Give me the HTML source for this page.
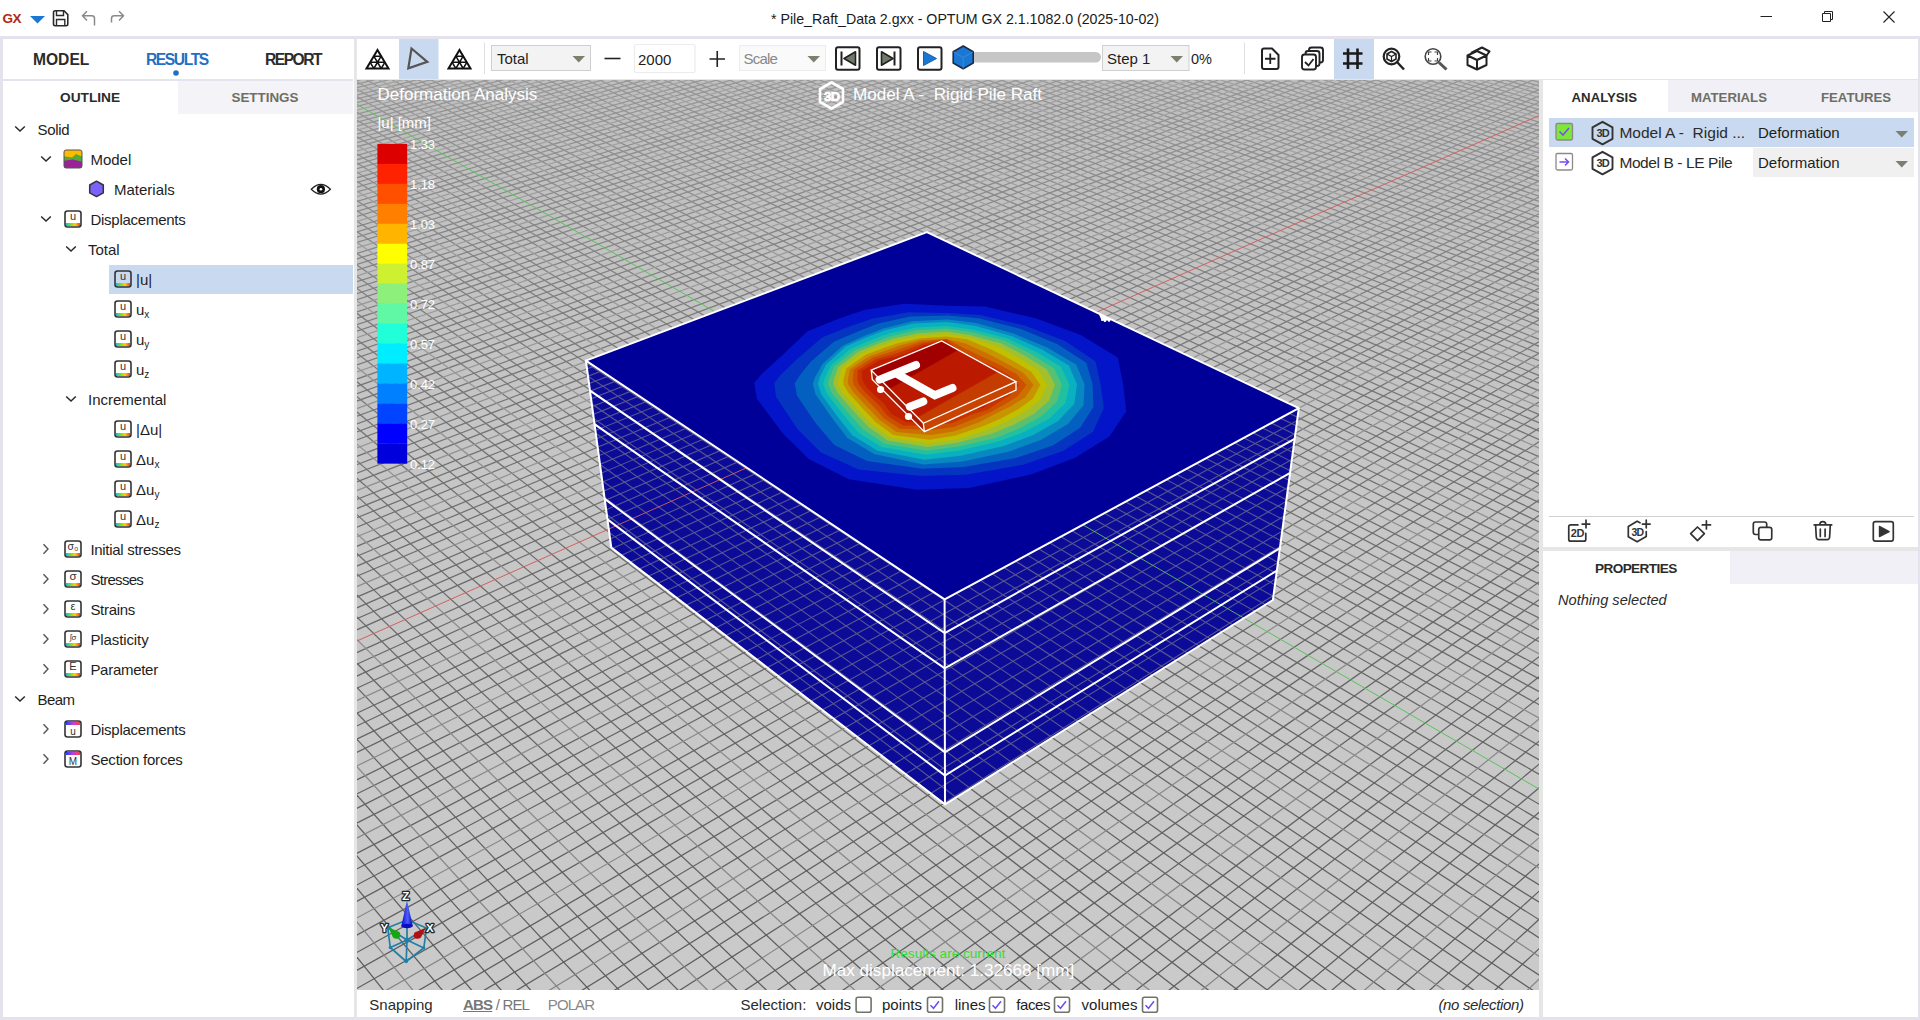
<!DOCTYPE html>
<html><head><meta charset="utf-8"><style>
html,body{margin:0;padding:0;}
body{width:1920px;height:1020px;position:relative;overflow:hidden;background:#e3e2ed;font-family:"Liberation Sans", sans-serif;color:#1e1e1e;}
.t{position:absolute;white-space:nowrap;}
.r{position:absolute;}
svg{position:absolute;overflow:visible;}
</style></head><body>
<div class="r" style="left:0px;top:0px;width:1920px;height:36px;background:#ffffff;"></div>
<div class="r" style="left:3px;top:39px;width:351px;height:978px;background:#ffffff;"></div>
<div class="r" style="left:354px;top:39px;width:3px;height:978px;background:#e6e6e6;"></div>
<div class="r" style="left:357px;top:39px;width:1561px;height:40px;background:#ffffff;"></div>
<div class="r" style="left:357px;top:79px;width:1561px;height:1px;background:#e4e4ee;"></div>
<div class="r" style="left:357px;top:990px;width:1182px;height:27px;background:#ffffff;"></div>
<div class="r" style="left:1539px;top:80px;width:4px;height:937px;background:#e6e6e6;"></div>
<div class="r" style="left:1543px;top:80px;width:375px;height:937px;background:#ffffff;"></div>
<div class="t" style="left:771px;top:11.6px;font-size:14.2px;line-height:14.2px;color:#1a1a1a;">* Pile_Raft_Data 2.gxx - OPTUM GX 2.1.1082.0 (2025-10-02)</div>
<div class="t" style="left:33px;top:51.8px;font-size:15.6px;line-height:15.6px;font-weight:bold;color:#2b2b2b;">MODEL</div>
<div class="t" style="left:146px;top:51.8px;font-size:15.6px;line-height:15.6px;font-weight:bold;color:#1f6fc5;letter-spacing:-1.4px;">RESULTS</div>
<div class="t" style="left:265px;top:51.8px;font-size:15.6px;line-height:15.6px;font-weight:bold;color:#2b2b2b;letter-spacing:-1.5px;">REPORT</div>
<svg style="left:172px;top:69px" width="8" height="8"><circle cx="4" cy="4" r="2.8" fill="#1f6fc5"/></svg>
<div class="r" style="left:3px;top:79px;width:350px;height:2px;background:#e4e3ee;"></div>
<div class="r" style="left:178px;top:81px;width:175px;height:33px;background:#f3f3f8;"></div>
<div class="t" style="left:60px;top:91.2px;font-size:13.7px;line-height:13.7px;font-weight:bold;color:#2b2b2b;">OUTLINE</div>
<div class="t" style="left:231.5px;top:91.3px;font-size:13.4px;line-height:13.4px;font-weight:bold;color:#6e6e64;">SETTINGS</div>
<svg style="left:0;top:0" width="1" height="1"><defs><linearGradient id="rb" x1="0" x2="1" y1="0" y2="0"><stop offset="0" stop-color="#00c8e6"/><stop offset="0.35" stop-color="#7be020"/><stop offset="0.65" stop-color="#ffd000"/><stop offset="1" stop-color="#ff3a1a"/></linearGradient><linearGradient id="rb2" x1="0" x2="1" y1="0" y2="0"><stop offset="0" stop-color="#2040ff"/><stop offset="0.5" stop-color="#c040e0"/><stop offset="1" stop-color="#ff4040"/></linearGradient></defs></svg>
<svg style="left:14px;top:125px" width="12" height="8"><path d="M1.2 1.5 L6 6 L10.8 1.5" fill="none" stroke="#2a2a2a" stroke-width="1.5"/></svg>
<div class="t" style="left:37.5px;top:122.2px;font-size:15px;line-height:15px;letter-spacing:-0.3px">Solid</div>
<svg style="left:40px;top:155px" width="12" height="8"><path d="M1.2 1.5 L6 6 L10.8 1.5" fill="none" stroke="#2a2a2a" stroke-width="1.5"/></svg>
<svg style="left:63px;top:149px" width="20" height="20"><clipPath id="mc"><rect x="1" y="1" width="18" height="18" rx="2"/></clipPath><g clip-path="url(#mc)"><rect x="0" y="0" width="20" height="20" fill="#ffbb00"/><path d="M0 7 L9 8.5 L13 5 L20 8 L20 20 L0 20Z" fill="#55aa33"/><path d="M0 12 L10 10.5 L20 13 L20 20 L0 20Z" fill="#992299"/></g><rect x="1" y="1" width="18" height="18" rx="2" fill="none" stroke="#555" stroke-width="1"/></svg>
<div class="t" style="left:90.4px;top:152.2px;font-size:15px;line-height:15px;">Model</div>
<svg style="left:88px;top:180px" width="17" height="18"><path d="M8.5 1.2 L15.3 5 L15.3 12.8 L8.5 16.6 L1.7 12.8 L1.7 5Z" fill="#7b61ff" stroke="#333" stroke-width="1.5" stroke-linejoin="round"/></svg>
<div class="t" style="left:114px;top:182.2px;font-size:15px;line-height:15px;">Materials</div>
<svg style="left:310px;top:181px" width="21" height="16"><path d="M1.3 8.3 Q10.9 -1.5 20.4 8.3 Q10.9 18 1.3 8.3Z" fill="none" stroke="#222" stroke-width="1.25"/><circle cx="10.9" cy="8.2" r="4.1" fill="#111"/><circle cx="10.9" cy="8.2" r="1.3" fill="#fff"/></svg>
<svg style="left:40px;top:215px" width="12" height="8"><path d="M1.2 1.5 L6 6 L10.8 1.5" fill="none" stroke="#2a2a2a" stroke-width="1.5"/></svg>
<svg style="left:64px;top:210px" width="18" height="18"><rect x="2" y="13" width="14" height="3" fill="url(#rb)"/><rect x="1" y="1" width="16" height="16" rx="2.5" fill="none" stroke="#333" stroke-width="1.6"/><text x="9" y="10" text-anchor="middle" font-family="Liberation Sans" font-size="11" fill="#333">u</text></svg>
<div class="t" style="left:90.4px;top:212.2px;font-size:15px;line-height:15px;letter-spacing:-0.25px">Displacements</div>
<svg style="left:65px;top:245px" width="12" height="8"><path d="M1.2 1.5 L6 6 L10.8 1.5" fill="none" stroke="#2a2a2a" stroke-width="1.5"/></svg>
<div class="t" style="left:88px;top:242.2px;font-size:15px;line-height:15px;">Total</div>
<div class="r" style="left:109px;top:265px;width:244px;height:29px;background:#c9d9ef;"></div>
<svg style="left:114px;top:270px" width="18" height="18"><rect x="2" y="13" width="14" height="3" fill="url(#rb)"/><rect x="1" y="1" width="16" height="16" rx="2.5" fill="none" stroke="#333" stroke-width="1.6"/><text x="9" y="10" text-anchor="middle" font-family="Liberation Sans" font-size="11" fill="#333">u</text></svg>
<div class="t" style="left:136px;top:271.7px;font-size:15px;line-height:15px;">|u|</div>
<svg style="left:114px;top:300px" width="18" height="18"><rect x="2" y="13" width="14" height="3" fill="url(#rb)"/><rect x="1" y="1" width="16" height="16" rx="2.5" fill="none" stroke="#333" stroke-width="1.6"/><text x="9" y="10" text-anchor="middle" font-family="Liberation Sans" font-size="11" fill="#333">u</text></svg>
<div class="t" style="left:136px;top:302.2px;font-size:15px;line-height:15px;">u<span style="font-size:10px;position:relative;top:3px">x</span></div>
<svg style="left:114px;top:330px" width="18" height="18"><rect x="2" y="13" width="14" height="3" fill="url(#rb)"/><rect x="1" y="1" width="16" height="16" rx="2.5" fill="none" stroke="#333" stroke-width="1.6"/><text x="9" y="10" text-anchor="middle" font-family="Liberation Sans" font-size="11" fill="#333">u</text></svg>
<div class="t" style="left:136px;top:332.2px;font-size:15px;line-height:15px;">u<span style="font-size:10px;position:relative;top:3px">y</span></div>
<svg style="left:114px;top:360px" width="18" height="18"><rect x="2" y="13" width="14" height="3" fill="url(#rb)"/><rect x="1" y="1" width="16" height="16" rx="2.5" fill="none" stroke="#333" stroke-width="1.6"/><text x="9" y="10" text-anchor="middle" font-family="Liberation Sans" font-size="11" fill="#333">u</text></svg>
<div class="t" style="left:136px;top:362.2px;font-size:15px;line-height:15px;">u<span style="font-size:10px;position:relative;top:3px">z</span></div>
<svg style="left:65px;top:395px" width="12" height="8"><path d="M1.2 1.5 L6 6 L10.8 1.5" fill="none" stroke="#2a2a2a" stroke-width="1.5"/></svg>
<div class="t" style="left:88px;top:392.2px;font-size:15px;line-height:15px;">Incremental</div>
<svg style="left:114px;top:420px" width="18" height="18"><rect x="2" y="13" width="14" height="3" fill="url(#rb)"/><rect x="1" y="1" width="16" height="16" rx="2.5" fill="none" stroke="#333" stroke-width="1.6"/><text x="9" y="10" text-anchor="middle" font-family="Liberation Sans" font-size="11" fill="#333">u</text></svg>
<div class="t" style="left:136px;top:421.7px;font-size:15px;line-height:15px;">|Δu|</div>
<svg style="left:114px;top:450px" width="18" height="18"><rect x="2" y="13" width="14" height="3" fill="url(#rb)"/><rect x="1" y="1" width="16" height="16" rx="2.5" fill="none" stroke="#333" stroke-width="1.6"/><text x="9" y="10" text-anchor="middle" font-family="Liberation Sans" font-size="11" fill="#333">u</text></svg>
<div class="t" style="left:136px;top:452.2px;font-size:15px;line-height:15px;">Δu<span style="font-size:10px;position:relative;top:3px">x</span></div>
<svg style="left:114px;top:480px" width="18" height="18"><rect x="2" y="13" width="14" height="3" fill="url(#rb)"/><rect x="1" y="1" width="16" height="16" rx="2.5" fill="none" stroke="#333" stroke-width="1.6"/><text x="9" y="10" text-anchor="middle" font-family="Liberation Sans" font-size="11" fill="#333">u</text></svg>
<div class="t" style="left:136px;top:482.2px;font-size:15px;line-height:15px;">Δu<span style="font-size:10px;position:relative;top:3px">y</span></div>
<svg style="left:114px;top:510px" width="18" height="18"><rect x="2" y="13" width="14" height="3" fill="url(#rb)"/><rect x="1" y="1" width="16" height="16" rx="2.5" fill="none" stroke="#333" stroke-width="1.6"/><text x="9" y="10" text-anchor="middle" font-family="Liberation Sans" font-size="11" fill="#333">u</text></svg>
<div class="t" style="left:136px;top:512.2px;font-size:15px;line-height:15px;">Δu<span style="font-size:10px;position:relative;top:3px">z</span></div>
<svg style="left:42px;top:543px" width="8" height="12"><path d="M1.5 1.2 L6 6 L1.5 10.8" fill="none" stroke="#555" stroke-width="1.4"/></svg>
<svg style="left:64px;top:540px" width="18" height="18"><rect x="2" y="13" width="14" height="3" fill="url(#rb)"/><rect x="1" y="1" width="16" height="16" rx="2.5" fill="none" stroke="#333" stroke-width="1.6"/><text x="9" y="10" text-anchor="middle" font-family="Liberation Sans" font-size="10.5" fill="#333">σ₀</text></svg>
<div class="t" style="left:90.4px;top:542.2px;font-size:15px;line-height:15px;letter-spacing:-0.3px">Initial stresses</div>
<svg style="left:42px;top:573px" width="8" height="12"><path d="M1.5 1.2 L6 6 L1.5 10.8" fill="none" stroke="#555" stroke-width="1.4"/></svg>
<svg style="left:64px;top:570px" width="18" height="18"><rect x="2" y="13" width="14" height="3" fill="url(#rb)"/><rect x="1" y="1" width="16" height="16" rx="2.5" fill="none" stroke="#333" stroke-width="1.6"/><text x="9" y="10" text-anchor="middle" font-family="Liberation Sans" font-size="11.5" fill="#333">σ</text></svg>
<div class="t" style="left:90.4px;top:572.2px;font-size:15px;line-height:15px;letter-spacing:-0.7px">Stresses</div>
<svg style="left:42px;top:603px" width="8" height="12"><path d="M1.5 1.2 L6 6 L1.5 10.8" fill="none" stroke="#555" stroke-width="1.4"/></svg>
<svg style="left:64px;top:600px" width="18" height="18"><rect x="2" y="13" width="14" height="3" fill="url(#rb)"/><rect x="1" y="1" width="16" height="16" rx="2.5" fill="none" stroke="#333" stroke-width="1.6"/><text x="9" y="10" text-anchor="middle" font-family="Liberation Sans" font-size="11" fill="#333">ε</text></svg>
<div class="t" style="left:90.4px;top:602.2px;font-size:15px;line-height:15px;letter-spacing:-0.3px">Strains</div>
<svg style="left:42px;top:633px" width="8" height="12"><path d="M1.5 1.2 L6 6 L1.5 10.8" fill="none" stroke="#555" stroke-width="1.4"/></svg>
<svg style="left:64px;top:630px" width="18" height="18"><rect x="2" y="13" width="14" height="3" fill="url(#rb)"/><rect x="1" y="1" width="16" height="16" rx="2.5" fill="none" stroke="#333" stroke-width="1.6"/><text x="9" y="10" text-anchor="middle" font-family="Liberation Sans" font-size="8" fill="#333">∫σ</text></svg>
<div class="t" style="left:90.4px;top:632.2px;font-size:15px;line-height:15px;letter-spacing:-0.1px">Plasticity</div>
<svg style="left:42px;top:663px" width="8" height="12"><path d="M1.5 1.2 L6 6 L1.5 10.8" fill="none" stroke="#555" stroke-width="1.4"/></svg>
<svg style="left:64px;top:660px" width="18" height="18"><rect x="2" y="13" width="14" height="3" fill="url(#rb)"/><rect x="1" y="1" width="16" height="16" rx="2.5" fill="none" stroke="#333" stroke-width="1.6"/><text x="9" y="10" text-anchor="middle" font-family="Liberation Sans" font-size="11" fill="#333">E</text></svg>
<div class="t" style="left:90.4px;top:662.2px;font-size:15px;line-height:15px;letter-spacing:-0.28px">Parameter</div>
<svg style="left:14px;top:695px" width="12" height="8"><path d="M1.2 1.5 L6 6 L10.8 1.5" fill="none" stroke="#2a2a2a" stroke-width="1.5"/></svg>
<div class="t" style="left:37.5px;top:692.2px;font-size:15px;line-height:15px;letter-spacing:-0.6px">Beam</div>
<svg style="left:42px;top:723px" width="8" height="12"><path d="M1.5 1.2 L6 6 L1.5 10.8" fill="none" stroke="#555" stroke-width="1.4"/></svg>
<svg style="left:64px;top:720px" width="18" height="18"><rect x="2" y="2" width="14" height="3" fill="url(#rb2)"/><rect x="1" y="1" width="16" height="16" rx="2.5" fill="none" stroke="#333" stroke-width="1.6"/><text x="9" y="14.6" text-anchor="middle" font-family="Liberation Sans" font-size="10" fill="#333">u</text></svg>
<div class="t" style="left:90.4px;top:722.2px;font-size:15px;line-height:15px;letter-spacing:-0.25px">Displacements</div>
<svg style="left:42px;top:753px" width="8" height="12"><path d="M1.5 1.2 L6 6 L1.5 10.8" fill="none" stroke="#555" stroke-width="1.4"/></svg>
<svg style="left:64px;top:750px" width="18" height="18"><rect x="2" y="2" width="14" height="3" fill="url(#rb2)"/><rect x="1" y="1" width="16" height="16" rx="2.5" fill="none" stroke="#333" stroke-width="1.6"/><text x="9" y="14.6" text-anchor="middle" font-family="Liberation Sans" font-size="10" fill="#333">M</text></svg>
<div class="t" style="left:90.4px;top:752.2px;font-size:15px;line-height:15px;letter-spacing:-0.2px">Section forces</div>
<svg style="left:0;top:0" width="140" height="36">
<text x="2.5" y="23.2" font-family="Liberation Sans" font-weight="bold" font-size="13.5" fill="#b02a10" letter-spacing="-0.5">GX</text>
<polygon points="30,16 45,16 37.5,23.5" fill="#1a78d4"/>
<path d="M53.5 12.5 Q53.5 10.8 55.2 10.8 L64 10.8 L67.8 14.6 L67.8 24 Q67.8 25.7 66.1 25.7 L55.2 25.7 Q53.5 25.7 53.5 24Z" fill="none" stroke="#2a2a2a" stroke-width="1.6"/>
<path d="M56.5 11 L56.5 15.5 L63.5 15.5 L63.5 11 M56.5 25.5 L56.5 19.5 L64.8 19.5 L64.8 25.5" fill="none" stroke="#2a2a2a" stroke-width="1.4"/>
<path d="M94.5 25.5 L94.5 18.5 Q94.5 15.8 91.8 15.8 L83 15.8 M87 11.2 L82.5 15.8 L87 20.4" fill="none" stroke="#8a8a8a" stroke-width="1.5"/>
<path d="M111.5 22.5 L111.5 18.5 Q111.5 15.8 114.2 15.8 L123.5 15.8 M119 11.2 L123.5 15.8 L119 20.4" fill="none" stroke="#8a8a8a" stroke-width="1.5"/>
</svg>
<svg style="left:1750px;top:0" width="170" height="36">
<path d="M10.5 16.5 L22 16.5" stroke="#222" stroke-width="1"/>
<path d="M72.5 13.5 L72.5 21.5 L80.5 21.5 L80.5 13.5Z M74.5 13.5 L74.5 11.5 L82.5 11.5 L82.5 19.5 L80.5 19.5" fill="none" stroke="#222" stroke-width="1"/>
<path d="M133.5 11.5 L144.5 22.5 M144.5 11.5 L133.5 22.5" stroke="#222" stroke-width="1.1"/>
</svg>
<svg style="left:0;top:0" width="1920" height="90"><rect x="399" y="39" width="39.5" height="40" fill="#c9d9ef"/><g transform="translate(365.5,48.5)" fill="none" stroke="#111" stroke-linejoin="miter">
<path d="M12 1.5 L23 20 L1 20Z" stroke-width="2"/>
<path d="M4.67 13.83 L19.33 13.83 M8.33 7.67 L15.67 7.67 M8.33 20 L15.67 7.67 M15.67 20 L19.33 13.83 M15.67 20 L8.33 7.67 M8.33 20 L4.67 13.83" stroke-width="1.5"/></g><path d="M411.5 48.5 L427.3 61.8 L408.3 68.3Z" fill="none" stroke="#555" stroke-width="2.2" stroke-linejoin="miter"/><g transform="translate(447.5,48.5)" fill="none" stroke="#111" stroke-linejoin="miter">
<path d="M12 1.5 L23 20 L1 20Z" stroke-width="2"/>
<path d="M4.67 13.83 L19.33 13.83 M8.33 7.67 L15.67 7.67 M8.33 20 L15.67 7.67 M15.67 20 L19.33 13.83 M15.67 20 L8.33 7.67 M8.33 20 L4.67 13.83" stroke-width="1.5"/></g><path d="M484.5 42.5 L484.5 74" stroke="#e0e0e0" stroke-width="1"/><rect x="491.5" y="45.5" width="99" height="25" fill="#f3f3f3" stroke="#cfcfcf" stroke-width="1"/><polygon points="572.5,56 585,56 578.75,62.5" fill="#7a7f6e"/><path d="M604.5 58.5 L620.5 58.5" stroke="#222" stroke-width="1.6"/><rect x="634.5" y="44.5" width="60.5" height="28" rx="2" fill="#fff" stroke="#ececec" stroke-width="1.2"/><path d="M709.5 59 L725 59 M717.25 51 L717.25 67" stroke="#222" stroke-width="1.6"/><rect x="739.5" y="45.5" width="86" height="25" fill="#fafafa" stroke="#ececec" stroke-width="1"/><polygon points="807.5,56 820,56 813.75,62.5" fill="#7a7f6e"/><rect x="836" y="47.2" width="23.5" height="22.5" rx="2" fill="none" stroke="#222" stroke-width="2"/><path d="M841.5 51.5 L841.5 65.5" stroke="#222" stroke-width="2"/><polygon points="855.5,51.8 855.5,65.2 844,58.5" fill="#6f7a68" stroke="#222" stroke-width="1.6" stroke-linejoin="round"/><rect x="877" y="47.2" width="23.5" height="22.5" rx="2" fill="none" stroke="#222" stroke-width="2"/><path d="M894.5 51.5 L894.5 65.5" stroke="#222" stroke-width="2"/><polygon points="881.5,51.8 881.5,65.2 893,58.5" fill="#6f7a68" stroke="#222" stroke-width="1.6" stroke-linejoin="round"/><rect x="918" y="47.2" width="23.5" height="22.5" rx="2" fill="none" stroke="#222" stroke-width="2"/><polygon points="923.5,51.5 923.5,65.5 936.5,58.5" fill="#1a78d4" stroke="#1a5fa8" stroke-width="1" stroke-linejoin="round"/><rect x="953" y="52" width="148" height="10.5" rx="5.25" fill="#c6c6c6"/><path d="M963.2 46 L973.2 51.7 L973.2 63 L963.2 68.7 L953.2 63 L953.2 51.7Z" fill="#1a78d4" stroke="#1e2a44" stroke-width="1.6" stroke-linejoin="round"/><path d="M953.5 52 L963.2 57.5 L973 52 M963.2 57.5 L963.2 68.5" fill="none" stroke="#3f8fe0" stroke-width="0.8"/><rect x="1102.5" y="45.5" width="86.5" height="25" fill="#f3f3f3" stroke="#cfcfcf" stroke-width="1"/><polygon points="1170.5,56 1183,56 1176.75,62.5" fill="#7a7f6e"/><path d="M1244.5 42.5 L1244.5 74" stroke="#e0e0e0" stroke-width="1"/><path d="M1262 50.5 Q1262 48.5 1264 48.5 L1272 48.5 L1278.5 55 L1278.5 67 Q1278.5 69 1276.5 69 L1264 69 Q1262 69 1262 67Z" fill="none" stroke="#222" stroke-width="2"/><path d="M1270.25 53.5 L1270.25 64 M1265 58.75 L1275.5 58.75" stroke="#222" stroke-width="1.8"/><g fill="#fff" stroke="#222" stroke-width="1.9"><rect x="1309" y="47.5" width="14" height="15" rx="2.5"/><rect x="1305.5" y="51" width="14" height="15" rx="2.5"/><rect x="1302" y="54.5" width="14" height="15" rx="2.5"/></g><path d="M1305 62 L1308.5 65.5 L1313.5 59" fill="none" stroke="#222" stroke-width="1.8"/><rect x="1334" y="39" width="40" height="40" fill="#c9d9ef"/><path d="M1348 48.5 L1348 69 M1357.5 48.5 L1357.5 69 M1343 53.5 L1362.5 53.5 M1343 63.5 L1362.5 63.5" stroke="#1a1a1a" stroke-width="2.6"/><circle cx="1391.5" cy="56.5" r="7.8" fill="none" stroke="#222" stroke-width="2.2"/><path d="M1397 62 L1404 69.5" stroke="#222" stroke-width="2.4"/><path d="M1391.5 51.5 L1396 54 L1396 59 L1391.5 61.5 L1387 59 L1387 54Z" fill="none" stroke="#222" stroke-width="1.6"/><path d="M1387 54 L1391.5 56.5 L1396 54 M1391.5 56.5 L1391.5 61.5" stroke="#222" stroke-width="1.2" fill="none"/><circle cx="1433" cy="56.5" r="7.8" fill="none" stroke="#444" stroke-width="1.6"/><path d="M1439 62.5 L1446.5 69.5" stroke="#555" stroke-width="3"/><path d="M1428.5 55 L1428.5 52 L1431.5 52 M1434.5 52 L1437.5 52 L1437.5 55 M1437.5 58 L1437.5 61 L1434.5 61 M1431.5 61 L1428.5 61 L1428.5 58" fill="none" stroke="#444" stroke-width="1.2"/><g fill="none" stroke="#222" stroke-width="2" stroke-linejoin="round"><path d="M1467.5 55.5 L1477 51 L1486.5 55.5 L1486.5 65 L1477 69.5 L1467.5 65Z M1467.5 55.5 L1477 60 L1486.5 55.5 M1477 60 L1477 69.5"/><path d="M1471 53 L1482 47.5 L1489.5 51.5 L1486.5 55.5"/></g></svg>
<div class="t" style="left:496.9px;top:51.3px;font-size:15px;line-height:15px;color:#1e1e1e;">Total</div>
<div class="t" style="left:638px;top:51.6px;font-size:15px;line-height:15px;color:#1e1e1e;">2000</div>
<div class="t" style="left:743.5px;top:51.3px;font-size:15px;line-height:15px;color:#888;letter-spacing:-0.8px;">Scale</div>
<div class="t" style="left:1107px;top:51.3px;font-size:15px;line-height:15px;color:#1e1e1e;">Step 1</div>
<div class="t" style="left:1191px;top:51.9px;font-size:14.5px;line-height:14.5px;color:#1e1e1e;">0%</div>
<svg style="left:357px;top:80px" width="1182" height="910" viewBox="357 80 1182 910">
<defs><linearGradient id="gridg" gradientUnits="userSpaceOnUse" x1="0" y1="80" x2="0" y2="989"><stop offset="0" stop-color="#969696"/><stop offset="0.3" stop-color="#787878"/><stop offset="0.6" stop-color="#686868"/><stop offset="1" stop-color="#5c5c5c"/></linearGradient><linearGradient id="gridm" gradientUnits="userSpaceOnUse" x1="0" y1="80" x2="0" y2="989"><stop offset="0" stop-color="#a2a2a2"/><stop offset="0.5" stop-color="#8e8e8e"/><stop offset="1" stop-color="#858585"/></linearGradient><clipPath id="vpc"><rect x="357" y="80" width="1182" height="910"/></clipPath>
<clipPath id="sides"><polygon points="585.9,360.6 944.6,599.4 945.0,804.4 611.3,547.6"/><polygon points="944.6,599.4 1298.8,408.2 1272.9,600.0 945.0,804.4"/></clipPath></defs>
<g clip-path="url(#vpc)">
<linearGradient id="bgg" gradientUnits="userSpaceOnUse" x1="0" y1="80" x2="0" y2="989"><stop offset="0" stop-color="#bfbfbf"/><stop offset="0.45" stop-color="#c6c6c6"/><stop offset="1" stop-color="#cacaca"/></linearGradient><rect x="357" y="80" width="1182" height="910" fill="url(#bgg)"/>
<g stroke="url(#gridg)" stroke-width="1.25" fill="none"><path d="M3222.6 -632.8L-2865.1 5429.1"/><path d="M3222.6 -632.8L-2941.5 5384.9"/><path d="M3222.6 -632.8L-3091.1 5298.2"/><path d="M3222.6 -632.8L-3164.3 5255.9"/><path d="M3222.6 -632.8L-3236.4 5214.1"/><path d="M3222.6 -632.8L-3307.5 5172.9"/><path d="M3222.6 -632.8L-3446.8 5092.2"/><path d="M3222.6 -632.8L-3515.0 5052.7"/><path d="M3222.6 -632.8L-3582.3 5013.8"/><path d="M3222.6 -632.8L-3648.6 4975.3"/><path d="M3222.6 -632.8L-3778.6 4900.0"/><path d="M3222.6 -632.8L-3842.3 4863.1"/><path d="M3222.6 -632.8L-3905.2 4826.7"/><path d="M3222.6 -632.8L-3967.2 4790.8"/><path d="M3222.6 -632.8L-4088.9 4720.3"/><path d="M3222.6 -632.8L-4148.5 4685.8"/><path d="M3222.6 -632.8L-4207.4 4651.7"/><path d="M3222.6 -632.8L-4265.6 4618.0"/><path d="M3222.6 -632.8L-4379.6 4551.9"/><path d="M3222.6 -632.8L-4435.6 4519.5"/><path d="M3222.6 -632.8L-4490.9 4487.5"/><path d="M3222.6 -632.8L-4545.5 4455.9"/><path d="M3222.6 -632.8L-4652.6 4393.8"/><path d="M3222.6 -632.8L-4705.2 4363.3"/><path d="M3222.6 -632.8L-4757.2 4333.2"/><path d="M3222.6 -632.8L-4808.6 4303.5"/><path d="M3222.6 -632.8L-4909.5 4245.0"/><path d="M3222.6 -632.8L-4959.0 4216.3"/><path d="M3222.6 -632.8L-5008.0 4188.0"/><path d="M3222.6 -632.8L-5056.4 4159.9"/><path d="M3222.6 -632.8L-5151.6 4104.8"/><path d="M3222.6 -632.8L-5198.3 4077.7"/><path d="M3222.6 -632.8L-5244.5 4051.0"/><path d="M3222.6 -632.8L-5290.2 4024.5"/><path d="M3222.6 -632.8L-5380.1 3972.4"/><path d="M3222.6 -632.8L-5424.3 3946.8"/><path d="M3222.6 -632.8L-5468.0 3921.5"/><path d="M3222.6 -632.8L-5511.2 3896.5"/><path d="M3222.6 -632.8L-5596.2 3847.3"/><path d="M3222.6 -632.8L-5638.1 3823.0"/><path d="M3222.6 -632.8L-5679.4 3799.1"/><path d="M3222.6 -632.8L-5720.4 3775.4"/><path d="M3222.6 -632.8L-5800.9 3728.7"/><path d="M3222.6 -632.8L-5840.6 3705.7"/><path d="M3222.6 -632.8L-5879.8 3683.0"/><path d="M3222.6 -632.8L-5918.6 3660.5"/><path d="M3222.6 -632.8L-5995.1 3616.3"/><path d="M3222.6 -632.8L-6032.7 3594.5"/><path d="M3222.6 -632.8L-6069.9 3572.9"/><path d="M3222.6 -632.8L-6106.8 3551.5"/><path d="M3222.6 -632.8L-6179.4 3509.5"/><path d="M3222.6 -632.8L-6215.2 3488.7"/><path d="M3222.6 -632.8L-6250.6 3468.2"/><path d="M3222.6 -632.8L-6285.7 3447.9"/><path d="M3222.6 -632.8L-6354.8 3407.9"/><path d="M3222.6 -632.8L-6388.8 3388.2"/><path d="M3222.6 -632.8L-6422.5 3368.7"/><path d="M3222.6 -632.8L-6455.9 3349.3"/><path d="M3222.6 -632.8L-6521.7 3311.2"/><path d="M3222.6 -632.8L-6554.2 3292.4"/><path d="M3222.6 -632.8L-6586.3 3273.8"/><path d="M3222.6 -632.8L-6618.1 3255.4"/><path d="M3222.6 -632.8L-6680.9 3219.0"/><path d="M3222.6 -632.8L-6711.8 3201.1"/><path d="M3222.6 -632.8L-6742.5 3183.4"/><path d="M3222.6 -632.8L-6772.8 3165.8"/><path d="M3222.6 -632.8L-6832.7 3131.1"/><path d="M3222.6 -632.8L-6862.3 3114.0"/><path d="M3222.6 -632.8L-6891.6 3097.0"/><path d="M3222.6 -632.8L-6920.6 3080.2"/><path d="M3222.6 -632.8L-6977.8 3047.0"/><path d="M3222.6 -632.8L-7006.1 3030.7"/><path d="M3222.6 -632.8L-7034.1 3014.5"/><path d="M3222.6 -632.8L-7061.8 2998.4"/><path d="M3222.6 -632.8L-7116.6 2966.7"/><path d="M3222.6 -632.8L-7143.6 2951.0"/><path d="M3222.6 -632.8L-7170.4 2935.5"/><path d="M3222.6 -632.8L-7197.0 2920.1"/><path d="M3222.6 -632.8L-7249.4 2889.7"/><path d="M3222.6 -632.8L-7275.3 2874.7"/><path d="M3222.6 -632.8L-7301.0 2859.9"/><path d="M3222.6 -632.8L-7326.4 2845.1"/><path d="M3222.6 -632.8L-7376.7 2816.0"/><path d="M3222.6 -632.8L-7401.5 2801.7"/><path d="M3222.6 -632.8L-7426.1 2787.4"/><path d="M3222.6 -632.8L-7450.5 2773.3"/><path d="M3222.6 -632.8L-7498.7 2745.3"/><path d="M3222.6 -632.8L-7522.5 2731.6"/><path d="M3222.6 -632.8L-7546.1 2717.9"/><path d="M3222.6 -632.8L-7569.6 2704.3"/><path d="M3222.6 -632.8L-7615.9 2677.5"/><path d="M3222.6 -632.8L-7638.7 2664.2"/><path d="M3222.6 -632.8L-7661.4 2651.1"/><path d="M3222.6 -632.8L-7683.9 2638.1"/><path d="M3222.6 -632.8L-7728.4 2612.3"/><path d="M3222.6 -632.8L-7750.4 2599.6"/><path d="M3222.6 -632.8L-7772.2 2587.0"/><path d="M3222.6 -632.8L-7793.8 2574.4"/><path d="M3222.6 -632.8L-7836.6 2549.7"/><path d="M3222.6 -632.8L-7857.7 2537.4"/><path d="M3222.6 -632.8L-7878.7 2525.3"/><path d="M3222.6 -632.8L-7899.5 2513.2"/><path d="M3222.6 -632.8L-7940.7 2489.4"/><path d="M3222.6 -632.8L-7961.0 2477.6"/><path d="M3222.6 -632.8L-7981.2 2465.9"/><path d="M3222.6 -632.8L-8001.2 2454.3"/><path d="M3222.6 -632.8L-8040.9 2431.3"/><path d="M3222.6 -632.8L-8060.5 2420.0"/><path d="M3222.6 -632.8L-8079.9 2408.7"/><path d="M3222.6 -632.8L-8099.2 2397.5"/><path d="M3222.6 -632.8L-8137.4 2375.4"/><path d="M3222.6 -632.8L-8156.3 2364.5"/><path d="M3222.6 -632.8L-8175.1 2353.6"/><path d="M3222.6 -632.8L-8193.7 2342.8"/><path d="M3222.6 -632.8L-8230.5 2321.5"/><path d="M3222.6 -632.8L-8248.7 2310.9"/><path d="M3222.6 -632.8L-8266.8 2300.4"/><path d="M3222.6 -632.8L-8284.8 2290.0"/><path d="M3222.6 -632.8L-8320.3 2269.5"/><path d="M3222.6 -632.8L-8337.9 2259.3"/><path d="M3222.6 -632.8L-8355.4 2249.2"/><path d="M3222.6 -632.8L-8372.7 2239.1"/><path d="M-915.8 -632.8L3281.4 4859.7"/><path d="M-915.8 -632.8L3355.4 4826.8"/><path d="M-915.8 -632.8L3428.5 4794.3"/><path d="M-915.8 -632.8L3572.2 4730.5"/><path d="M-915.8 -632.8L3642.7 4699.1"/><path d="M-915.8 -632.8L3712.5 4668.1"/><path d="M-915.8 -632.8L3781.4 4637.4"/><path d="M-915.8 -632.8L3916.9 4577.2"/><path d="M-915.8 -632.8L3983.5 4547.6"/><path d="M-915.8 -632.8L4049.4 4518.3"/><path d="M-915.8 -632.8L4114.5 4489.4"/><path d="M-915.8 -632.8L4242.5 4432.5"/><path d="M-915.8 -632.8L4305.5 4404.5"/><path d="M-915.8 -632.8L4367.8 4376.8"/><path d="M-915.8 -632.8L4429.4 4349.4"/><path d="M-915.8 -632.8L4550.5 4295.6"/><path d="M-915.8 -632.8L4610.2 4269.1"/><path d="M-915.8 -632.8L4669.1 4242.9"/><path d="M-915.8 -632.8L4727.5 4216.9"/><path d="M-915.8 -632.8L4842.3 4165.9"/><path d="M-915.8 -632.8L4898.9 4140.7"/><path d="M-915.8 -632.8L4954.8 4115.9"/><path d="M-915.8 -632.8L5010.2 4091.3"/><path d="M-915.8 -632.8L5119.2 4042.8"/><path d="M-915.8 -632.8L5172.8 4019.0"/><path d="M-915.8 -632.8L5226.0 3995.3"/><path d="M-915.8 -632.8L5278.6 3972.0"/><path d="M-915.8 -632.8L5382.2 3925.9"/><path d="M-915.8 -632.8L5433.2 3903.2"/><path d="M-915.8 -632.8L5483.7 3880.8"/><path d="M-915.8 -632.8L5533.7 3858.5"/><path d="M-915.8 -632.8L5632.3 3814.7"/><path d="M-915.8 -632.8L5680.9 3793.1"/><path d="M-915.8 -632.8L5729.0 3771.7"/><path d="M-915.8 -632.8L5776.6 3750.6"/><path d="M-915.8 -632.8L5870.6 3708.8"/><path d="M-915.8 -632.8L5916.9 3688.2"/><path d="M-915.8 -632.8L5962.7 3667.9"/><path d="M-915.8 -632.8L6008.1 3647.7"/><path d="M-915.8 -632.8L6097.7 3607.8"/><path d="M-915.8 -632.8L6141.9 3588.2"/><path d="M-915.8 -632.8L6185.7 3568.8"/><path d="M-915.8 -632.8L6229.0 3549.5"/><path d="M-915.8 -632.8L6314.6 3511.5"/><path d="M-915.8 -632.8L6356.7 3492.7"/><path d="M-915.8 -632.8L6398.6 3474.1"/><path d="M-915.8 -632.8L6440.0 3455.7"/><path d="M-915.8 -632.8L6521.8 3419.4"/><path d="M-915.8 -632.8L6562.1 3401.4"/><path d="M-915.8 -632.8L6602.1 3383.7"/><path d="M-915.8 -632.8L6641.7 3366.0"/><path d="M-915.8 -632.8L6719.9 3331.3"/><path d="M-915.8 -632.8L6758.6 3314.1"/><path d="M-915.8 -632.8L6796.8 3297.1"/><path d="M-915.8 -632.8L6834.8 3280.2"/><path d="M-915.8 -632.8L6909.7 3246.9"/><path d="M-915.8 -632.8L6946.7 3230.5"/><path d="M-915.8 -632.8L6983.4 3214.2"/><path d="M-915.8 -632.8L7019.7 3198.0"/><path d="M-915.8 -632.8L7091.5 3166.1"/><path d="M-915.8 -632.8L7127.0 3150.3"/><path d="M-915.8 -632.8L7162.2 3134.7"/><path d="M-915.8 -632.8L7197.1 3119.2"/><path d="M-915.8 -632.8L7266.0 3088.6"/><path d="M-915.8 -632.8L7300.0 3073.4"/><path d="M-915.8 -632.8L7333.8 3058.4"/><path d="M-915.8 -632.8L7367.3 3043.5"/><path d="M-915.8 -632.8L7433.4 3014.1"/><path d="M-915.8 -632.8L7466.1 2999.6"/><path d="M-915.8 -632.8L7498.5 2985.2"/><path d="M-915.8 -632.8L7530.7 2970.9"/><path d="M-915.8 -632.8L7594.3 2942.6"/><path d="M-915.8 -632.8L7625.7 2928.7"/><path d="M-915.8 -632.8L7656.9 2914.8"/><path d="M-915.8 -632.8L7687.8 2901.0"/><path d="M-915.8 -632.8L7749.0 2873.9"/><path d="M-915.8 -632.8L7779.2 2860.4"/><path d="M-915.8 -632.8L7809.2 2847.1"/><path d="M-915.8 -632.8L7839.0 2833.9"/><path d="M-915.8 -632.8L7897.9 2807.7"/><path d="M-915.8 -632.8L7927.0 2794.8"/><path d="M-915.8 -632.8L7955.8 2781.9"/><path d="M-915.8 -632.8L7984.5 2769.2"/><path d="M-915.8 -632.8L8041.2 2744.0"/><path d="M-915.8 -632.8L8069.2 2731.5"/><path d="M-915.8 -632.8L8097.1 2719.1"/><path d="M-915.8 -632.8L8124.7 2706.9"/><path d="M-915.8 -632.8L8179.3 2682.6"/><path d="M-915.8 -632.8L8206.4 2670.6"/><path d="M-915.8 -632.8L8233.2 2658.6"/><path d="M-915.8 -632.8L8259.8 2646.8"/><path d="M-915.8 -632.8L8312.5 2623.4"/><path d="M-915.8 -632.8L8338.6 2611.8"/><path d="M-915.8 -632.8L8364.5 2600.3"/><path d="M-915.8 -632.8L8390.2 2588.9"/><path d="M-915.8 -632.8L8441.0 2566.2"/><path d="M-915.8 -632.8L8466.2 2555.1"/><path d="M-915.8 -632.8L8491.2 2543.9"/><path d="M-915.8 -632.8L8516.0 2532.9"/><path d="M-915.8 -632.8L8565.1 2511.1"/><path d="M-915.8 -632.8L8589.4 2500.3"/><path d="M-915.8 -632.8L8613.6 2489.5"/><path d="M-915.8 -632.8L8637.6 2478.9"/><path d="M-915.8 -632.8L8685.0 2457.8"/><path d="M-915.8 -632.8L8708.5 2447.4"/><path d="M-915.8 -632.8L8731.8 2437.0"/><path d="M-915.8 -632.8L8755.0 2426.7"/><path d="M-915.8 -632.8L8800.9 2406.3"/><path d="M-915.8 -632.8L8823.6 2396.2"/><path d="M-915.8 -632.8L8846.2 2386.2"/><path d="M-915.8 -632.8L8868.6 2376.2"/><path d="M-915.8 -632.8L8913.0 2356.5"/><path d="M-915.8 -632.8L8935.0 2346.7"/><path d="M-915.8 -632.8L8956.8 2337.0"/><path d="M-915.8 -632.8L8978.5 2327.3"/><path d="M-915.8 -632.8L9021.5 2308.2"/><path d="M-915.8 -632.8L9042.7 2298.8"/><path d="M-915.8 -632.8L9063.9 2289.4"/><path d="M-915.8 -632.8L9084.9 2280.1"/><path d="M-915.8 -632.8L9126.5 2261.6"/></g><g stroke="url(#gridm)" stroke-width="1.25" fill="none"><path d="M3222.6 -632.8L-3016.9 5341.2"/><path d="M3222.6 -632.8L-3377.7 5132.3"/><path d="M3222.6 -632.8L-3714.0 4937.4"/><path d="M3222.6 -632.8L-4028.5 4755.3"/><path d="M3222.6 -632.8L-4322.9 4584.7"/><path d="M3222.6 -632.8L-4599.4 4424.6"/><path d="M3222.6 -632.8L-4859.3 4274.1"/><path d="M3222.6 -632.8L-5104.3 4132.2"/><path d="M3222.6 -632.8L-5335.4 3998.3"/><path d="M3222.6 -632.8L-5554.0 3871.7"/><path d="M3222.6 -632.8L-5760.9 3751.9"/><path d="M3222.6 -632.8L-5957.0 3638.3"/><path d="M3222.6 -632.8L-6320.4 3427.8"/><path d="M3222.6 -632.8L-6489.0 3330.2"/><path d="M3222.6 -632.8L-6649.6 3237.1"/><path d="M3222.6 -632.8L-6802.9 3148.3"/><path d="M3222.6 -632.8L-6949.3 3063.5"/><path d="M3222.6 -632.8L-7089.3 2982.5"/><path d="M3222.6 -632.8L-7223.3 2904.9"/><path d="M3222.6 -632.8L-7351.6 2830.5"/><path d="M3222.6 -632.8L-7474.7 2759.2"/><path d="M3222.6 -632.8L-7592.8 2690.8"/><path d="M3222.6 -632.8L-7706.2 2625.1"/><path d="M3222.6 -632.8L-7815.3 2562.0"/><path d="M3222.6 -632.8L-7920.2 2501.2"/><path d="M3222.6 -632.8L-8021.1 2442.8"/><path d="M3222.6 -632.8L-8118.4 2386.4"/><path d="M3222.6 -632.8L-8212.2 2332.1"/><path d="M3222.6 -632.8L-8302.6 2279.7"/><path d="M3222.6 -632.8L-8390.0 2229.1"/><path d="M-915.8 -632.8L3500.8 4762.2"/><path d="M-915.8 -632.8L3849.6 4607.2"/><path d="M-915.8 -632.8L4178.9 4460.8"/><path d="M-915.8 -632.8L4490.3 4322.4"/><path d="M-915.8 -632.8L4785.2 4191.3"/><path d="M-915.8 -632.8L5064.9 4066.9"/><path d="M-915.8 -632.8L5330.6 3948.8"/><path d="M-915.8 -632.8L5583.3 3836.5"/><path d="M-915.8 -632.8L5823.8 3729.6"/><path d="M-915.8 -632.8L6053.1 3627.7"/><path d="M-915.8 -632.8L6481.1 3437.5"/><path d="M-915.8 -632.8L6681.0 3348.6"/><path d="M-915.8 -632.8L6872.4 3263.5"/><path d="M-915.8 -632.8L7055.8 3182.0"/><path d="M-915.8 -632.8L7231.7 3103.8"/><path d="M-915.8 -632.8L7400.5 3028.8"/><path d="M-915.8 -632.8L7562.6 2956.7"/><path d="M-915.8 -632.8L7718.5 2887.4"/><path d="M-915.8 -632.8L7868.5 2820.7"/><path d="M-915.8 -632.8L8013.0 2756.5"/><path d="M-915.8 -632.8L8152.1 2694.7"/><path d="M-915.8 -632.8L8286.3 2635.0"/><path d="M-915.8 -632.8L8415.7 2577.5"/><path d="M-915.8 -632.8L8540.7 2522.0"/><path d="M-915.8 -632.8L8661.4 2468.3"/><path d="M-915.8 -632.8L8778.0 2416.4"/><path d="M-915.8 -632.8L8890.9 2366.3"/><path d="M-915.8 -632.8L9000.0 2317.8"/><path d="M-915.8 -632.8L9105.8 2270.8"/></g>
<path d="M3222.6 -632.8L-6143.3 3530.4" stroke="#d06060" stroke-width="1" fill="none"/><path d="M-915.8 -632.8L6272.0 3530.4" stroke="#5cc05c" stroke-width="1" fill="none"/>
<polygon points="585.9,360.6 944.6,599.4 945.0,804.4 611.3,547.6" fill="#0c0c98"/>
<polygon points="944.6,599.4 1298.8,408.2 1272.9,600.0 945.0,804.4" fill="#0c0c98"/>
<g clip-path="url(#sides)"><g stroke="#8c8c88" stroke-width="1.1" fill="none" opacity="0.6"><path d="M3222.6 -632.8L-2865.1 5429.1"/><path d="M3222.6 -632.8L-2941.5 5384.9"/><path d="M3222.6 -632.8L-3091.1 5298.2"/><path d="M3222.6 -632.8L-3164.3 5255.9"/><path d="M3222.6 -632.8L-3236.4 5214.1"/><path d="M3222.6 -632.8L-3307.5 5172.9"/><path d="M3222.6 -632.8L-3446.8 5092.2"/><path d="M3222.6 -632.8L-3515.0 5052.7"/><path d="M3222.6 -632.8L-3582.3 5013.8"/><path d="M3222.6 -632.8L-3648.6 4975.3"/><path d="M3222.6 -632.8L-3778.6 4900.0"/><path d="M3222.6 -632.8L-3842.3 4863.1"/><path d="M3222.6 -632.8L-3905.2 4826.7"/><path d="M3222.6 -632.8L-3967.2 4790.8"/><path d="M3222.6 -632.8L-4088.9 4720.3"/><path d="M3222.6 -632.8L-4148.5 4685.8"/><path d="M3222.6 -632.8L-4207.4 4651.7"/><path d="M3222.6 -632.8L-4265.6 4618.0"/><path d="M3222.6 -632.8L-4379.6 4551.9"/><path d="M3222.6 -632.8L-4435.6 4519.5"/><path d="M3222.6 -632.8L-4490.9 4487.5"/><path d="M3222.6 -632.8L-4545.5 4455.9"/><path d="M3222.6 -632.8L-4652.6 4393.8"/><path d="M3222.6 -632.8L-4705.2 4363.3"/><path d="M3222.6 -632.8L-4757.2 4333.2"/><path d="M3222.6 -632.8L-4808.6 4303.5"/><path d="M3222.6 -632.8L-4909.5 4245.0"/><path d="M3222.6 -632.8L-4959.0 4216.3"/><path d="M3222.6 -632.8L-5008.0 4188.0"/><path d="M3222.6 -632.8L-5056.4 4159.9"/><path d="M3222.6 -632.8L-5151.6 4104.8"/><path d="M3222.6 -632.8L-5198.3 4077.7"/><path d="M3222.6 -632.8L-5244.5 4051.0"/><path d="M3222.6 -632.8L-5290.2 4024.5"/><path d="M3222.6 -632.8L-5380.1 3972.4"/><path d="M3222.6 -632.8L-5424.3 3946.8"/><path d="M3222.6 -632.8L-5468.0 3921.5"/><path d="M3222.6 -632.8L-5511.2 3896.5"/><path d="M3222.6 -632.8L-5596.2 3847.3"/><path d="M3222.6 -632.8L-5638.1 3823.0"/><path d="M3222.6 -632.8L-5679.4 3799.1"/><path d="M3222.6 -632.8L-5720.4 3775.4"/><path d="M3222.6 -632.8L-5800.9 3728.7"/><path d="M3222.6 -632.8L-5840.6 3705.7"/><path d="M3222.6 -632.8L-5879.8 3683.0"/><path d="M3222.6 -632.8L-5918.6 3660.5"/><path d="M3222.6 -632.8L-5995.1 3616.3"/><path d="M3222.6 -632.8L-6032.7 3594.5"/><path d="M3222.6 -632.8L-6069.9 3572.9"/><path d="M3222.6 -632.8L-6106.8 3551.5"/><path d="M3222.6 -632.8L-6179.4 3509.5"/><path d="M3222.6 -632.8L-6215.2 3488.7"/><path d="M3222.6 -632.8L-6250.6 3468.2"/><path d="M3222.6 -632.8L-6285.7 3447.9"/><path d="M3222.6 -632.8L-6354.8 3407.9"/><path d="M3222.6 -632.8L-6388.8 3388.2"/><path d="M3222.6 -632.8L-6422.5 3368.7"/><path d="M3222.6 -632.8L-6455.9 3349.3"/><path d="M3222.6 -632.8L-6521.7 3311.2"/><path d="M3222.6 -632.8L-6554.2 3292.4"/><path d="M3222.6 -632.8L-6586.3 3273.8"/><path d="M3222.6 -632.8L-6618.1 3255.4"/><path d="M3222.6 -632.8L-6680.9 3219.0"/><path d="M3222.6 -632.8L-6711.8 3201.1"/><path d="M3222.6 -632.8L-6742.5 3183.4"/><path d="M3222.6 -632.8L-6772.8 3165.8"/><path d="M3222.6 -632.8L-6832.7 3131.1"/><path d="M3222.6 -632.8L-6862.3 3114.0"/><path d="M3222.6 -632.8L-6891.6 3097.0"/><path d="M3222.6 -632.8L-6920.6 3080.2"/><path d="M3222.6 -632.8L-6977.8 3047.0"/><path d="M3222.6 -632.8L-7006.1 3030.7"/><path d="M3222.6 -632.8L-7034.1 3014.5"/><path d="M3222.6 -632.8L-7061.8 2998.4"/><path d="M3222.6 -632.8L-7116.6 2966.7"/><path d="M3222.6 -632.8L-7143.6 2951.0"/><path d="M3222.6 -632.8L-7170.4 2935.5"/><path d="M3222.6 -632.8L-7197.0 2920.1"/><path d="M3222.6 -632.8L-7249.4 2889.7"/><path d="M3222.6 -632.8L-7275.3 2874.7"/><path d="M3222.6 -632.8L-7301.0 2859.9"/><path d="M3222.6 -632.8L-7326.4 2845.1"/><path d="M3222.6 -632.8L-7376.7 2816.0"/><path d="M3222.6 -632.8L-7401.5 2801.7"/><path d="M3222.6 -632.8L-7426.1 2787.4"/><path d="M3222.6 -632.8L-7450.5 2773.3"/><path d="M3222.6 -632.8L-7498.7 2745.3"/><path d="M3222.6 -632.8L-7522.5 2731.6"/><path d="M3222.6 -632.8L-7546.1 2717.9"/><path d="M3222.6 -632.8L-7569.6 2704.3"/><path d="M3222.6 -632.8L-7615.9 2677.5"/><path d="M3222.6 -632.8L-7638.7 2664.2"/><path d="M3222.6 -632.8L-7661.4 2651.1"/><path d="M3222.6 -632.8L-7683.9 2638.1"/><path d="M3222.6 -632.8L-7728.4 2612.3"/><path d="M3222.6 -632.8L-7750.4 2599.6"/><path d="M3222.6 -632.8L-7772.2 2587.0"/><path d="M3222.6 -632.8L-7793.8 2574.4"/><path d="M3222.6 -632.8L-7836.6 2549.7"/><path d="M3222.6 -632.8L-7857.7 2537.4"/><path d="M3222.6 -632.8L-7878.7 2525.3"/><path d="M3222.6 -632.8L-7899.5 2513.2"/><path d="M3222.6 -632.8L-7940.7 2489.4"/><path d="M3222.6 -632.8L-7961.0 2477.6"/><path d="M3222.6 -632.8L-7981.2 2465.9"/><path d="M3222.6 -632.8L-8001.2 2454.3"/><path d="M3222.6 -632.8L-8040.9 2431.3"/><path d="M3222.6 -632.8L-8060.5 2420.0"/><path d="M3222.6 -632.8L-8079.9 2408.7"/><path d="M3222.6 -632.8L-8099.2 2397.5"/><path d="M3222.6 -632.8L-8137.4 2375.4"/><path d="M3222.6 -632.8L-8156.3 2364.5"/><path d="M3222.6 -632.8L-8175.1 2353.6"/><path d="M3222.6 -632.8L-8193.7 2342.8"/><path d="M3222.6 -632.8L-8230.5 2321.5"/><path d="M3222.6 -632.8L-8248.7 2310.9"/><path d="M3222.6 -632.8L-8266.8 2300.4"/><path d="M3222.6 -632.8L-8284.8 2290.0"/><path d="M3222.6 -632.8L-8320.3 2269.5"/><path d="M3222.6 -632.8L-8337.9 2259.3"/><path d="M3222.6 -632.8L-8355.4 2249.2"/><path d="M3222.6 -632.8L-8372.7 2239.1"/><path d="M-915.8 -632.8L3281.4 4859.7"/><path d="M-915.8 -632.8L3355.4 4826.8"/><path d="M-915.8 -632.8L3428.5 4794.3"/><path d="M-915.8 -632.8L3572.2 4730.5"/><path d="M-915.8 -632.8L3642.7 4699.1"/><path d="M-915.8 -632.8L3712.5 4668.1"/><path d="M-915.8 -632.8L3781.4 4637.4"/><path d="M-915.8 -632.8L3916.9 4577.2"/><path d="M-915.8 -632.8L3983.5 4547.6"/><path d="M-915.8 -632.8L4049.4 4518.3"/><path d="M-915.8 -632.8L4114.5 4489.4"/><path d="M-915.8 -632.8L4242.5 4432.5"/><path d="M-915.8 -632.8L4305.5 4404.5"/><path d="M-915.8 -632.8L4367.8 4376.8"/><path d="M-915.8 -632.8L4429.4 4349.4"/><path d="M-915.8 -632.8L4550.5 4295.6"/><path d="M-915.8 -632.8L4610.2 4269.1"/><path d="M-915.8 -632.8L4669.1 4242.9"/><path d="M-915.8 -632.8L4727.5 4216.9"/><path d="M-915.8 -632.8L4842.3 4165.9"/><path d="M-915.8 -632.8L4898.9 4140.7"/><path d="M-915.8 -632.8L4954.8 4115.9"/><path d="M-915.8 -632.8L5010.2 4091.3"/><path d="M-915.8 -632.8L5119.2 4042.8"/><path d="M-915.8 -632.8L5172.8 4019.0"/><path d="M-915.8 -632.8L5226.0 3995.3"/><path d="M-915.8 -632.8L5278.6 3972.0"/><path d="M-915.8 -632.8L5382.2 3925.9"/><path d="M-915.8 -632.8L5433.2 3903.2"/><path d="M-915.8 -632.8L5483.7 3880.8"/><path d="M-915.8 -632.8L5533.7 3858.5"/><path d="M-915.8 -632.8L5632.3 3814.7"/><path d="M-915.8 -632.8L5680.9 3793.1"/><path d="M-915.8 -632.8L5729.0 3771.7"/><path d="M-915.8 -632.8L5776.6 3750.6"/><path d="M-915.8 -632.8L5870.6 3708.8"/><path d="M-915.8 -632.8L5916.9 3688.2"/><path d="M-915.8 -632.8L5962.7 3667.9"/><path d="M-915.8 -632.8L6008.1 3647.7"/><path d="M-915.8 -632.8L6097.7 3607.8"/><path d="M-915.8 -632.8L6141.9 3588.2"/><path d="M-915.8 -632.8L6185.7 3568.8"/><path d="M-915.8 -632.8L6229.0 3549.5"/><path d="M-915.8 -632.8L6314.6 3511.5"/><path d="M-915.8 -632.8L6356.7 3492.7"/><path d="M-915.8 -632.8L6398.6 3474.1"/><path d="M-915.8 -632.8L6440.0 3455.7"/><path d="M-915.8 -632.8L6521.8 3419.4"/><path d="M-915.8 -632.8L6562.1 3401.4"/><path d="M-915.8 -632.8L6602.1 3383.7"/><path d="M-915.8 -632.8L6641.7 3366.0"/><path d="M-915.8 -632.8L6719.9 3331.3"/><path d="M-915.8 -632.8L6758.6 3314.1"/><path d="M-915.8 -632.8L6796.8 3297.1"/><path d="M-915.8 -632.8L6834.8 3280.2"/><path d="M-915.8 -632.8L6909.7 3246.9"/><path d="M-915.8 -632.8L6946.7 3230.5"/><path d="M-915.8 -632.8L6983.4 3214.2"/><path d="M-915.8 -632.8L7019.7 3198.0"/><path d="M-915.8 -632.8L7091.5 3166.1"/><path d="M-915.8 -632.8L7127.0 3150.3"/><path d="M-915.8 -632.8L7162.2 3134.7"/><path d="M-915.8 -632.8L7197.1 3119.2"/><path d="M-915.8 -632.8L7266.0 3088.6"/><path d="M-915.8 -632.8L7300.0 3073.4"/><path d="M-915.8 -632.8L7333.8 3058.4"/><path d="M-915.8 -632.8L7367.3 3043.5"/><path d="M-915.8 -632.8L7433.4 3014.1"/><path d="M-915.8 -632.8L7466.1 2999.6"/><path d="M-915.8 -632.8L7498.5 2985.2"/><path d="M-915.8 -632.8L7530.7 2970.9"/><path d="M-915.8 -632.8L7594.3 2942.6"/><path d="M-915.8 -632.8L7625.7 2928.7"/><path d="M-915.8 -632.8L7656.9 2914.8"/><path d="M-915.8 -632.8L7687.8 2901.0"/><path d="M-915.8 -632.8L7749.0 2873.9"/><path d="M-915.8 -632.8L7779.2 2860.4"/><path d="M-915.8 -632.8L7809.2 2847.1"/><path d="M-915.8 -632.8L7839.0 2833.9"/><path d="M-915.8 -632.8L7897.9 2807.7"/><path d="M-915.8 -632.8L7927.0 2794.8"/><path d="M-915.8 -632.8L7955.8 2781.9"/><path d="M-915.8 -632.8L7984.5 2769.2"/><path d="M-915.8 -632.8L8041.2 2744.0"/><path d="M-915.8 -632.8L8069.2 2731.5"/><path d="M-915.8 -632.8L8097.1 2719.1"/><path d="M-915.8 -632.8L8124.7 2706.9"/><path d="M-915.8 -632.8L8179.3 2682.6"/><path d="M-915.8 -632.8L8206.4 2670.6"/><path d="M-915.8 -632.8L8233.2 2658.6"/><path d="M-915.8 -632.8L8259.8 2646.8"/><path d="M-915.8 -632.8L8312.5 2623.4"/><path d="M-915.8 -632.8L8338.6 2611.8"/><path d="M-915.8 -632.8L8364.5 2600.3"/><path d="M-915.8 -632.8L8390.2 2588.9"/><path d="M-915.8 -632.8L8441.0 2566.2"/><path d="M-915.8 -632.8L8466.2 2555.1"/><path d="M-915.8 -632.8L8491.2 2543.9"/><path d="M-915.8 -632.8L8516.0 2532.9"/><path d="M-915.8 -632.8L8565.1 2511.1"/><path d="M-915.8 -632.8L8589.4 2500.3"/><path d="M-915.8 -632.8L8613.6 2489.5"/><path d="M-915.8 -632.8L8637.6 2478.9"/><path d="M-915.8 -632.8L8685.0 2457.8"/><path d="M-915.8 -632.8L8708.5 2447.4"/><path d="M-915.8 -632.8L8731.8 2437.0"/><path d="M-915.8 -632.8L8755.0 2426.7"/><path d="M-915.8 -632.8L8800.9 2406.3"/><path d="M-915.8 -632.8L8823.6 2396.2"/><path d="M-915.8 -632.8L8846.2 2386.2"/><path d="M-915.8 -632.8L8868.6 2376.2"/><path d="M-915.8 -632.8L8913.0 2356.5"/><path d="M-915.8 -632.8L8935.0 2346.7"/><path d="M-915.8 -632.8L8956.8 2337.0"/><path d="M-915.8 -632.8L8978.5 2327.3"/><path d="M-915.8 -632.8L9021.5 2308.2"/><path d="M-915.8 -632.8L9042.7 2298.8"/><path d="M-915.8 -632.8L9063.9 2289.4"/><path d="M-915.8 -632.8L9084.9 2280.1"/><path d="M-915.8 -632.8L9126.5 2261.6"/><path d="M3222.6 -632.8L-3016.9 5341.2"/><path d="M3222.6 -632.8L-3377.7 5132.3"/><path d="M3222.6 -632.8L-3714.0 4937.4"/><path d="M3222.6 -632.8L-4028.5 4755.3"/><path d="M3222.6 -632.8L-4322.9 4584.7"/><path d="M3222.6 -632.8L-4599.4 4424.6"/><path d="M3222.6 -632.8L-4859.3 4274.1"/><path d="M3222.6 -632.8L-5104.3 4132.2"/><path d="M3222.6 -632.8L-5335.4 3998.3"/><path d="M3222.6 -632.8L-5554.0 3871.7"/><path d="M3222.6 -632.8L-5760.9 3751.9"/><path d="M3222.6 -632.8L-5957.0 3638.3"/><path d="M3222.6 -632.8L-6320.4 3427.8"/><path d="M3222.6 -632.8L-6489.0 3330.2"/><path d="M3222.6 -632.8L-6649.6 3237.1"/><path d="M3222.6 -632.8L-6802.9 3148.3"/><path d="M3222.6 -632.8L-6949.3 3063.5"/><path d="M3222.6 -632.8L-7089.3 2982.5"/><path d="M3222.6 -632.8L-7223.3 2904.9"/><path d="M3222.6 -632.8L-7351.6 2830.5"/><path d="M3222.6 -632.8L-7474.7 2759.2"/><path d="M3222.6 -632.8L-7592.8 2690.8"/><path d="M3222.6 -632.8L-7706.2 2625.1"/><path d="M3222.6 -632.8L-7815.3 2562.0"/><path d="M3222.6 -632.8L-7920.2 2501.2"/><path d="M3222.6 -632.8L-8021.1 2442.8"/><path d="M3222.6 -632.8L-8118.4 2386.4"/><path d="M3222.6 -632.8L-8212.2 2332.1"/><path d="M3222.6 -632.8L-8302.6 2279.7"/><path d="M3222.6 -632.8L-8390.0 2229.1"/><path d="M-915.8 -632.8L3500.8 4762.2"/><path d="M-915.8 -632.8L3849.6 4607.2"/><path d="M-915.8 -632.8L4178.9 4460.8"/><path d="M-915.8 -632.8L4490.3 4322.4"/><path d="M-915.8 -632.8L4785.2 4191.3"/><path d="M-915.8 -632.8L5064.9 4066.9"/><path d="M-915.8 -632.8L5330.6 3948.8"/><path d="M-915.8 -632.8L5583.3 3836.5"/><path d="M-915.8 -632.8L5823.8 3729.6"/><path d="M-915.8 -632.8L6053.1 3627.7"/><path d="M-915.8 -632.8L6481.1 3437.5"/><path d="M-915.8 -632.8L6681.0 3348.6"/><path d="M-915.8 -632.8L6872.4 3263.5"/><path d="M-915.8 -632.8L7055.8 3182.0"/><path d="M-915.8 -632.8L7231.7 3103.8"/><path d="M-915.8 -632.8L7400.5 3028.8"/><path d="M-915.8 -632.8L7562.6 2956.7"/><path d="M-915.8 -632.8L7718.5 2887.4"/><path d="M-915.8 -632.8L7868.5 2820.7"/><path d="M-915.8 -632.8L8013.0 2756.5"/><path d="M-915.8 -632.8L8152.1 2694.7"/><path d="M-915.8 -632.8L8286.3 2635.0"/><path d="M-915.8 -632.8L8415.7 2577.5"/><path d="M-915.8 -632.8L8540.7 2522.0"/><path d="M-915.8 -632.8L8661.4 2468.3"/><path d="M-915.8 -632.8L8778.0 2416.4"/><path d="M-915.8 -632.8L8890.9 2366.3"/><path d="M-915.8 -632.8L9000.0 2317.8"/><path d="M-915.8 -632.8L9105.8 2270.8"/></g>
<path d="M3222.6 -632.8L-6143.3 3530.4" stroke="#d06060" stroke-width="1" fill="none" opacity="0.9"/><path d="M-915.8 -632.8L6272.0 3530.4" stroke="#5cc05c" stroke-width="1" fill="none" opacity="0.9"/></g>
<polygon points="926.9,232.1 1298.8,408.2 944.6,599.4 585.9,360.6" fill="#000099"/>
<polygon points="754.3,382.7 762.4,373.3 780.9,356.6 807.6,331.3 839.1,318.6 864.2,310.1 904.2,303.8 948.4,305.7 984.9,306.6 1035.8,318.2 1080.8,335.1 1117.8,357.6 1123.0,383.7 1126.3,411.2 1109.4,436.6 1075.1,457.7 1032.5,474.1 969.2,487.9 917.1,489.8 848.6,479.3 808.7,459.0 782.6,433.3 756.8,398.4" fill="#0414c8"/><polygon points="774.2,383.0 780.9,374.6 796.5,359.4 822.4,337.2 850.5,326.0 872.8,318.4 908.2,312.2 947.9,312.9 980.5,314.9 1025.5,325.7 1065.1,340.9 1095.5,361.2 1100.6,384.0 1103.9,408.1 1093.1,431.7 1063.1,451.1 1023.0,464.8 965.8,474.8 920.5,476.1 858.6,469.4 820.9,452.4 797.4,428.9 776.1,397.1" fill="#0434c0"/><polygon points="794.7,383.4 799.2,375.9 810.5,361.9 833.8,341.8 858.5,331.2 878.3,323.6 910.2,316.4 947.7,315.6 978.7,318.2 1021.0,329.1 1057.1,343.9 1086.3,362.7 1092.5,384.1 1093.4,406.7 1080.2,427.7 1052.8,445.6 1016.1,457.9 963.8,467.1 922.3,468.7 867.1,461.0 834.3,445.1 815.9,423.5 797.0,395.7" fill="#0460c0"/><polygon points="812.8,383.7 815.2,377.0 822.5,364.1 843.0,345.6 865.3,335.6 883.3,328.5 912.4,321.2 947.4,319.5 976.2,323.1 1014.5,333.8 1047.1,347.6 1076.1,364.4 1084.5,384.2 1083.5,405.3 1067.9,424.0 1041.8,439.6 1009.4,451.4 962.4,461.5 923.4,464.6 874.1,454.1 847.4,438.0 832.5,418.5 815.6,394.5" fill="#0888c0"/><polygon points="818.0,383.8 819.8,377.3 825.9,364.7 845.7,346.6 867.3,336.9 885.2,330.2 913.6,323.6 947.3,322.1 974.7,325.8 1011.5,336.0 1042.0,349.5 1068.9,365.6 1077.0,384.3 1074.3,404.1 1058.2,421.0 1033.3,435.0 1003.9,445.9 960.9,455.8 924.6,459.7 877.6,450.7 852.3,435.3 837.8,417.0 821.1,394.1" fill="#08b0c0"/><polygon points="823.2,383.9 824.9,377.7 830.6,365.6 850.7,348.7 871.6,339.7 888.7,333.6 915.4,327.6 947.0,325.9 972.8,329.5 1007.9,338.6 1036.0,351.7 1061.1,366.8 1069.4,384.4 1065.5,402.9 1049.6,418.4 1026.2,431.1 999.1,441.2 959.6,450.5 925.8,454.8 881.3,446.9 858.0,432.2 843.7,415.3 826.9,393.8" fill="#20c0a0"/><polygon points="828.0,384.0 829.3,378.0 834.5,366.3 854.7,350.3 875.0,341.9 891.3,336.1 916.7,330.3 946.8,328.5 971.4,332.1 1005.1,340.7 1030.6,353.7 1053.8,368.0 1061.8,384.5 1057.0,401.7 1041.8,416.1 1020.4,428.0 995.8,437.9 958.6,446.6 926.8,450.7 884.6,443.7 863.1,429.4 848.9,413.7 832.0,393.4" fill="#58c070"/><polygon points="833.3,384.1 834.2,378.3 838.4,367.0 858.3,351.8 877.9,343.8 893.6,338.4 918.2,333.3 946.6,331.6 970.0,334.9 1001.4,343.4 1025.0,355.7 1046.7,369.2 1054.9,384.6 1049.2,400.6 1034.1,413.7 1014.2,424.6 991.5,433.8 957.6,442.7 927.8,446.9 887.8,440.5 868.2,426.7 854.3,412.1 837.7,393.0" fill="#a0c030"/><polygon points="838.1,384.2 838.6,378.6 842.1,367.7 861.9,353.2 880.9,345.7 895.7,340.4 919.3,335.8 946.5,334.1 968.8,337.2 997.3,346.3 1018.9,358.0 1038.8,370.4 1047.2,384.7 1040.5,399.4 1025.9,411.2 1007.8,421.1 987.4,429.7 956.8,439.6 928.7,443.3 890.7,437.7 872.2,424.5 858.9,410.8 842.6,392.7" fill="#c0c000"/><polygon points="843.4,384.3 843.5,379.0 846.2,368.4 865.8,354.8 884.2,347.8 898.4,343.0 920.5,338.2 946.3,336.6 967.6,339.4 992.5,349.9 1012.4,360.4 1031.2,371.7 1040.4,384.8 1033.0,398.4 1018.6,409.0 1001.9,418.0 983.5,425.9 955.7,435.4 929.6,439.7 893.3,435.1 876.1,422.4 863.5,409.4 848.0,392.3" fill="#c89400"/><polygon points="848.2,384.3 847.9,379.3 850.0,369.1 869.5,356.3 887.4,349.9 900.8,345.3 921.3,340.1 946.1,338.9 965.3,343.6 987.6,353.4 1005.7,362.9 1023.5,372.9 1033.6,384.8 1025.4,397.3 1010.5,406.5 994.7,414.1 979.6,422.1 954.6,431.3 930.8,434.9 896.6,431.9 880.0,420.3 868.2,408.0 853.1,392.0" fill="#cc7000"/><polygon points="853.6,384.4 852.8,379.6 853.8,369.8 872.8,357.6 890.7,352.1 903.2,347.7 922.1,341.8 946.2,338.7 963.1,347.8 982.7,357.0 1000.0,364.9 1016.3,374.1 1026.4,384.9 1017.7,396.3 1004.3,404.6 990.9,412.0 975.7,418.2 953.6,427.1 932.0,430.0 899.8,428.7 883.8,418.2 873.4,406.5 858.7,391.6" fill="#cc5000"/><polygon points="859.0,384.5 857.6,380.0 857.6,370.5 876.1,358.9 893.9,354.2 905.7,350.0 923.0,343.5 946.1,340.0 960.9,352.0 977.9,360.5 994.4,367.0 1009.0,375.3 1019.3,385.0 1010.0,395.2 998.0,402.7 987.1,409.9 971.8,414.4 952.5,422.9 933.2,425.2 903.1,425.4 887.7,416.1 878.7,405.0 864.3,391.3" fill="#c83400"/><polygon points="864.5,384.6 862.5,380.3 861.5,371.2 879.4,360.3 897.2,356.3 908.1,352.4 923.8,345.2 946.0,341.2 958.7,356.2 973.0,364.1 988.8,369.1 1001.7,376.5 1012.1,385.1 1002.3,394.2 991.7,400.8 983.3,407.9 967.9,410.5 951.4,418.8 934.4,420.4 906.4,422.2 891.5,414.0 883.9,403.4 870.0,390.9" fill="#c02000"/>
<path d="M590.0 390.7L944.7 633.0L1294.7 438.8" fill="none" stroke="#fff" stroke-width="2"/><path d="M594.5 424.1L944.7 668.4L1290.1 472.9" fill="none" stroke="#fff" stroke-width="2"/><path d="M604.7 498.9L944.9 752.4L1279.9 548.2" fill="none" stroke="#fff" stroke-width="2"/><path d="M607.5 519.4L944.9 775.5L1276.9 570.6" fill="none" stroke="#fff" stroke-width="2"/>
<path d="M585.9 360.6L926.9 232.1L1298.8 408.2L944.6 599.4Z M585.9 360.6L611.3 547.6L945.0 804.4L1272.9 600.0L1298.8 408.2 M944.6 599.4L945.0 804.4" fill="none" stroke="#fff" stroke-width="2" stroke-linejoin="round"/>
</g>
<rect x="377.4" y="143.90" width="29.8" height="20.2" fill="#dc0000"/><rect x="377.4" y="163.87" width="29.8" height="20.2" fill="#ff2200"/><rect x="377.4" y="183.84" width="29.8" height="20.2" fill="#ff5000"/><rect x="377.4" y="203.81" width="29.8" height="20.2" fill="#ff8000"/><rect x="377.4" y="223.78" width="29.8" height="20.2" fill="#ffb400"/><rect x="377.4" y="243.75" width="29.8" height="20.2" fill="#ffff00"/><rect x="377.4" y="263.72" width="29.8" height="20.2" fill="#cdf030"/><rect x="377.4" y="283.69" width="29.8" height="20.2" fill="#8cf07a"/><rect x="377.4" y="303.66" width="29.8" height="20.2" fill="#60f8a4"/><rect x="377.4" y="323.63" width="29.8" height="20.2" fill="#20ffd8"/><rect x="377.4" y="343.60" width="29.8" height="20.2" fill="#00ecff"/><rect x="377.4" y="363.57" width="29.8" height="20.2" fill="#00b4ff"/><rect x="377.4" y="383.54" width="29.8" height="20.2" fill="#0080ff"/><rect x="377.4" y="403.51" width="29.8" height="20.2" fill="#0044ff"/><rect x="377.4" y="423.48" width="29.8" height="20.2" fill="#0000ff"/><rect x="377.4" y="443.45" width="29.8" height="20.2" fill="#0000dc"/>
</svg>
<svg style="left:0;top:0" width="1920" height="1020">
<defs><linearGradient id="raftg" x1="0" y1="0" x2="1" y2="1" gradientUnits="objectBoundingBox"><stop offset="0" stop-color="#a00000"/><stop offset="0.35" stop-color="#a00000"/><stop offset="0.36" stop-color="#bc1a00"/><stop offset="0.62" stop-color="#bc1a00"/><stop offset="0.63" stop-color="#c43c00"/><stop offset="1" stop-color="#c43c00"/></linearGradient></defs>
<polygon points="871.25,370.2 923.3,423.3 924.4,431.7 872.3,379.5" fill="#a81800"/>
<polygon points="923.3,423.3 1016,381.7 1016,390 924.4,431.7" fill="#c84400"/>
<polygon points="941.7,341 1016,381.7 923.3,423.3 871.25,370.2" fill="url(#raftg)"/>
<path d="M871.25 370.2L941.7 341L1016 381.7L923.3 423.3Z M871.25 370.2L872.3 379.5L924.4 431.7L1016 390L1016 381.7 M923.3 423.3L924.4 431.7" fill="none" stroke="#fff" stroke-width="1.3"/>
<path d="M879.6 379.6L916 365 M898 374.4L934.8 395.2L952.5 388 M909.8 406.7L923.3 401.5" stroke="#fff" stroke-width="8" stroke-linecap="round" fill="none"/>
<circle cx="880.6" cy="389.5" r="3.6" fill="#fff"/><circle cx="908.5" cy="416.5" r="3.6" fill="#fff"/>
<path d="M1098.6 313.8 L1110.8 319.4 L1110 321.4 L1108.8 322 L1107.6 320.4 L1106.6 320.4 L1105.6 322 L1104.2 322 L1103.2 320.4 L1102.6 321 L1101.4 321 L1100.8 318.4 Z" fill="#fff"/>
</svg>
<div class="t" style="left:377.5px;top:85.6px;font-size:17px;line-height:17px;color:#fff;">Deformation Analysis</div>
<svg style="left:817px;top:80px" width="30" height="32"><path d="M14.5 2.5 L26 9 L26 22 L14.5 28.5 L3 22 L3 9Z" fill="none" stroke="#fff" stroke-width="2.6" stroke-linejoin="round"/><text x="14.8" y="21" text-anchor="middle" font-family="Liberation Sans" font-weight="bold" font-size="13" fill="#fff" stroke="#fff" stroke-width="0.7" letter-spacing="-0.6">3D</text></svg>
<div class="t" style="left:853px;top:85.6px;font-size:17.1px;line-height:17.1px;color:#fff;">Model A -&nbsp; Rigid Pile Raft</div>
<div class="t" style="left:377.4px;top:115.3px;font-size:15px;line-height:15px;color:#fff;">|u| [mm]</div>
<div class="t" style="left:410px;top:138.3px;font-size:13px;line-height:13px;color:#fff;letter-spacing:-0.1px;">1.33</div>
<div class="t" style="left:410px;top:178.3px;font-size:13px;line-height:13px;color:#fff;letter-spacing:-0.1px;">1.18</div>
<div class="t" style="left:410px;top:218.3px;font-size:13px;line-height:13px;color:#fff;letter-spacing:-0.1px;">1.03</div>
<div class="t" style="left:410px;top:258.3px;font-size:13px;line-height:13px;color:#fff;letter-spacing:-0.1px;">0.87</div>
<div class="t" style="left:410px;top:298.3px;font-size:13px;line-height:13px;color:#fff;letter-spacing:-0.1px;">0.72</div>
<div class="t" style="left:410px;top:338.3px;font-size:13px;line-height:13px;color:#fff;letter-spacing:-0.1px;">0.57</div>
<div class="t" style="left:410px;top:378.3px;font-size:13px;line-height:13px;color:#fff;letter-spacing:-0.1px;">0.42</div>
<div class="t" style="left:410px;top:418.3px;font-size:13px;line-height:13px;color:#fff;letter-spacing:-0.1px;">0.27</div>
<div class="t" style="left:410px;top:458.3px;font-size:13px;line-height:13px;color:#fff;letter-spacing:-0.1px;">0.12</div>
<div class="t" style="left:647.9px;width:600px;text-align:center;top:947.3px;font-size:13.6px;line-height:13.6px;color:#33dd33;">Results are current</div>
<div class="t" style="left:648.4px;width:600px;text-align:center;top:961.8px;font-size:17.1px;line-height:17.1px;color:#fff;">Max displacement: 1.32668 [mm]</div>
<svg style="left:370px;top:880px" width="80" height="90" viewBox="370 880 80 90">
<defs><linearGradient id="zc" x1="0" x2="1" y1="0" y2="0"><stop offset="0" stop-color="#0a0ac8"/><stop offset="0.55" stop-color="#4a5cff"/><stop offset="1" stop-color="#0808b0"/></linearGradient></defs>
<g stroke="#1f7fa8" stroke-width="1.7" fill="none" stroke-linejoin="round">
<path d="M387.7 927.7 L407 920 L426.5 928 L407 940Z M387.7 927.7 L390.3 947.5 L406.2 961.5 L407 940 M426.5 928 L423.8 948 L406.2 961.5 M390.3 947.5 L407 940 L423.8 948 M407 921 L407 940"/>
</g>
<g fill="#1f7fa8"><circle cx="407" cy="940" r="2.6"/><circle cx="390.3" cy="947.5" r="1.6"/><circle cx="423.8" cy="948" r="1.6"/><circle cx="406.2" cy="961.5" r="1.8"/></g>
<polygon points="407,900.5 401.3,926 412.8,926" fill="url(#zc)"/>
<ellipse cx="407" cy="926" rx="5.8" ry="2.2" fill="#0c0cc0"/>
<path d="M388.5 927.5 L399.5 932 Q401.5 936 398.5 938.5 Q395.5 939.5 393 937.5Z" fill="#12a812"/>
<path d="M425.5 928 L414.5 932.5 Q412.5 936.5 415.5 938.5 Q418.5 939.5 421 937.5Z" fill="#b01010"/>
<g font-family="Liberation Sans" font-weight="bold" font-size="11.5" fill="#fff" stroke="#1a2a30" stroke-width="2.6" paint-order="stroke" stroke-linejoin="round">
<text x="402.2" y="900">Z</text><text x="380.5" y="931.5">Y</text><text x="426" y="932">X</text></g>
</svg>
<div class="r" style="left:1668px;top:80px;width:250px;height:32px;background:#f0f0f6;"></div>
<div class="t" style="left:1571.6px;top:90.7px;font-size:13.2px;line-height:13.2px;font-weight:bold;color:#2b2b2b;">ANALYSIS</div>
<div class="t" style="left:1691px;top:90.7px;font-size:13.2px;line-height:13.2px;font-weight:bold;color:#6e6e64;">MATERIALS</div>
<div class="t" style="left:1821px;top:90.7px;font-size:13.2px;line-height:13.2px;font-weight:bold;color:#6e6e64;">FEATURES</div>
<div class="r" style="left:1549px;top:118px;width:365px;height:29px;background:#c9d9ef;"></div>
<div class="r" style="left:1753px;top:148px;width:161px;height:29px;background:#f0f0f0;"></div>
<svg style="left:1540px;top:110px" width="380" height="80">
<rect x="16" y="13.5" width="16.5" height="16.5" rx="1.5" fill="#7ee83a" stroke="#8a8a8a" stroke-width="1.3"/>
<path d="M19.5 21.5 L23 25 L29 18" fill="none" stroke="#7a4ff0" stroke-width="1.6"/>
<rect x="16" y="43.5" width="16.5" height="16.5" rx="1.5" fill="#fff" stroke="#8a8a8a" stroke-width="1.3"/>
<path d="M19.5 52 L28.5 52 M25 48.5 L28.5 52 L25 55.5" fill="none" stroke="#7a4ff0" stroke-width="1.6"/>
<path d="M62.5 11.8 L72.5 17.3 L72.5 28.8 L62.5 34.3 L52.5 28.8 L52.5 17.3Z" fill="none" stroke="#333" stroke-width="1.9" stroke-linejoin="round"/>
<text x="62.7" y="27.3" text-anchor="middle" font-family="Liberation Sans" font-weight="bold" font-size="11" fill="#333" letter-spacing="-0.9">3D</text>
<path d="M62.5 41.8 L72.5 47.3 L72.5 58.8 L62.5 64.3 L52.5 58.8 L52.5 47.3Z" fill="none" stroke="#333" stroke-width="1.9" stroke-linejoin="round"/>
<text x="62.7" y="57.3" text-anchor="middle" font-family="Liberation Sans" font-weight="bold" font-size="11" fill="#333" letter-spacing="-0.9">3D</text>
<polygon points="355.5,21 368,21 361.75,27.5" fill="#7a7f6e"/>
<polygon points="355.5,51 368,51 361.75,57.5" fill="#7a7f6e"/>
</svg>
<div class="t" style="left:1619.4px;top:125.0px;font-size:15.5px;line-height:15.5px;color:#2b2b2b;">Model A -&nbsp; Rigid ...</div>
<div class="t" style="left:1619.4px;top:155.0px;font-size:15.5px;line-height:15.5px;color:#2b2b2b;letter-spacing:-0.4px;">Model B - LE Pile</div>
<div class="t" style="left:1758px;top:125.3px;font-size:15px;line-height:15px;color:#1e1e1e;">Deformation</div>
<div class="t" style="left:1758px;top:155.3px;font-size:15px;line-height:15px;color:#1e1e1e;">Deformation</div>
<div class="r" style="left:1549px;top:516px;width:365px;height:1px;background:#d0d0d0;"></div>
<svg style="left:0;top:0" width="1920" height="1020"><g fill="none" stroke="#333" stroke-width="1.7" stroke-linejoin="round" stroke-linecap="round">
<path d="M1577.9 524.9 L1570.75 524.9 Q1568.75 524.9 1568.75 526.9 L1568.75 539.2 Q1568.75 541.2 1570.75 541.2 L1583.8 541.2 Q1585.8 541.2 1585.8 539.2 L1585.8 533.25"/>
<path d="M1586 520.2 L1586 527.8 M1582.2 524.1 L1589.8 524.1"/>
<path d="M1640 522.8 L1637.1 521.2 L1628.3 526.4 L1628.3 536.8 L1637.1 541.8 L1646.25 536.6 L1646.25 531.6"/>
<path d="M1646.25 520.2 L1646.25 527.8 M1642.4 524.1 L1650.1 524.1"/>
<path d="M1690.6 533.7 L1697.5 527 L1704.4 533.7 L1697.5 540.6Z"/>
<path d="M1706.4 520.8 L1706.4 529 M1702.3 524.9 L1710.5 524.9"/>
<rect x="1753.3" y="522" width="13.4" height="12.5" rx="2.2"/>
<rect x="1758.75" y="527.4" width="13" height="12.5" rx="2.2" fill="#fff"/>
<path d="M1814.2 524.9 L1831.7 524.9 M1819.8 524.9 Q1819.8 521.6 1822.8 521.6 Q1825.8 521.6 1825.8 524.9 M1815.6 525.3 L1816.3 537.3 Q1816.5 539.6 1818.8 539.6 L1827.1 539.6 Q1829.4 539.6 1829.6 537.3 L1830.3 525.3 M1820.3 529.2 L1820.3 536.4 M1825.1 529.2 L1825.1 536.4"/>
<rect x="1873.3" y="521.6" width="20" height="19.6" rx="2.2"/>
</g>
<text x="1577.3" y="537" text-anchor="middle" font-family="Liberation Sans" font-weight="bold" font-size="11" fill="#333" letter-spacing="-0.6">2D</text>
<text x="1637.5" y="535.8" text-anchor="middle" font-family="Liberation Sans" font-weight="bold" font-size="10.5" fill="#333" letter-spacing="-0.6">3D</text>
<polygon points="1879.4,526.4 1889.2,531.6 1879.4,536.6" fill="#333" stroke="#333" stroke-width="1.2" stroke-linejoin="round"/>
</svg>
<div class="r" style="left:1543px;top:547px;width:375px;height:4px;background:#e6e6e6;"></div>
<div class="r" style="left:1730px;top:551px;width:188px;height:33px;background:#f0f0f6;"></div>
<div class="t" style="left:1595px;top:561.5px;font-size:13.6px;line-height:13.6px;font-weight:bold;color:#2b2b2b;letter-spacing:-0.6px;">PROPERTIES</div>
<div class="t" style="left:1558px;top:592.9px;font-size:14.6px;line-height:14.6px;font-style:italic;color:#2b2b2b;">Nothing selected</div>
<div class="t" style="left:369.3px;top:996.8px;font-size:15px;line-height:15px;color:#2b2b2b;">Snapping</div>
<div class="t" style="left:463px;top:996.8px;font-size:15px;line-height:15px;color:#777;letter-spacing:-0.8px;"><b style="text-decoration:underline">ABS</b> / REL</div>
<div class="t" style="left:547.8px;top:996.8px;font-size:15px;line-height:15px;color:#888;letter-spacing:-0.9px;">POLAR</div>
<div class="t" style="left:740.5px;top:996.8px;font-size:15px;line-height:15px;color:#2b2b2b;">Selection:</div>
<div class="t" style="left:816px;top:996.8px;font-size:15px;line-height:15px;color:#1e1e1e;">voids</div>
<div class="t" style="left:882px;top:996.8px;font-size:15px;line-height:15px;color:#1e1e1e;">points</div>
<div class="t" style="left:954.7px;top:996.8px;font-size:15px;line-height:15px;color:#1e1e1e;">lines</div>
<div class="t" style="left:1016.3px;top:996.8px;font-size:15px;line-height:15px;color:#1e1e1e;letter-spacing:-0.4px;">faces</div>
<div class="t" style="left:1081.6px;top:996.8px;font-size:15px;line-height:15px;color:#1e1e1e;">volumes</div>
<svg style="left:0;top:0" width="1920" height="1020"><rect x="856.1" y="997.3" width="15" height="15" rx="2" fill="#fff" stroke="#6f7468" stroke-width="1.6"/><rect x="927.5" y="997.3" width="15" height="15" rx="2" fill="#fff" stroke="#6f7468" stroke-width="1.6"/><path d="M930.5 1005.3 L933.5 1008.3 L939 1001.3" fill="none" stroke="#6a50f0" stroke-width="1.5"/><rect x="989.5" y="997.3" width="15" height="15" rx="2" fill="#fff" stroke="#6f7468" stroke-width="1.6"/><path d="M992.5 1005.3 L995.5 1008.3 L1001 1001.3" fill="none" stroke="#6a50f0" stroke-width="1.5"/><rect x="1054.5" y="997.3" width="15" height="15" rx="2" fill="#fff" stroke="#6f7468" stroke-width="1.6"/><path d="M1057.5 1005.3 L1060.5 1008.3 L1066 1001.3" fill="none" stroke="#6a50f0" stroke-width="1.5"/><rect x="1142.5" y="997.3" width="15" height="15" rx="2" fill="#fff" stroke="#6f7468" stroke-width="1.6"/><path d="M1145.5 1005.3 L1148.5 1008.3 L1154 1001.3" fill="none" stroke="#6a50f0" stroke-width="1.5"/></svg>
<div class="t" style="left:923.5999999999999px;width:600px;text-align:right;top:996.8px;font-size:15px;line-height:15px;font-style:italic;color:#2b2b2b;letter-spacing:-0.35px;">(no selection)</div>
</body></html>
